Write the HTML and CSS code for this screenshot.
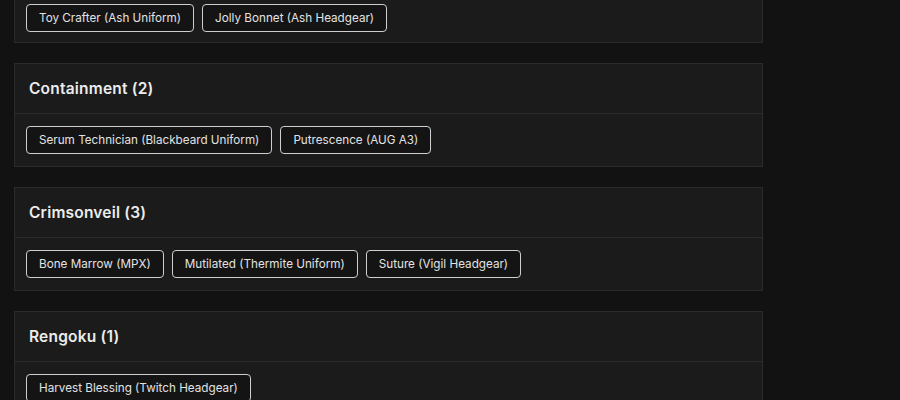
FILE: index.html
```html
<!DOCTYPE html>
<html lang="en">
<head>
    <meta charset="UTF-8">
    <title>Event Collections</title>
    <link rel="stylesheet" href="styles.css">
</head>
<body>
    <div class="collections">
        <section class="collection collection-tail">
            <div class="collection-items">
                <span class="item-tag">Toy Crafter (Ash Uniform)</span>
                <span class="item-tag">Jolly Bonnet (Ash Headgear)</span>
            </div>
        </section>

        <section class="collection">
            <h3 class="collection-title">Containment (2)</h3>
            <div class="collection-items">
                <span class="item-tag">Serum Technician (Blackbeard Uniform)</span>
                <span class="item-tag">Putrescence (AUG A3)</span>
            </div>
        </section>

        <section class="collection">
            <h3 class="collection-title">Crimsonveil (3)</h3>
            <div class="collection-items">
                <span class="item-tag">Bone Marrow (MPX)</span>
                <span class="item-tag">Mutilated (Thermite Uniform)</span>
                <span class="item-tag">Suture (Vigil Headgear)</span>
            </div>
        </section>

        <section class="collection">
            <h3 class="collection-title">Rengoku (1)</h3>
            <div class="collection-items">
                <span class="item-tag">Harvest Blessing (Twitch Headgear)</span>
            </div>
        </section>
    </div>
</body>
</html>
```

FILE: styles.css
```css
/* Basic reset */
* {
    margin: 0;
    padding: 0;
    box-sizing: border-box;
}

body {
    background-color: #121212;
    color: #e6e6e6;
    font-family: Inter, 'Open Sans', sans-serif;
    overflow: hidden;
}

/* List of collection cards, scrolled part way down */
.collections {
    width: 749px;
    margin-left: 14px;
    margin-top: -9px;
    display: flex;
    flex-direction: column;
    gap: 20px;
}

.collection {
    background-color: #1b1b1b;
    border: 1px solid #2b2b2b;
}

/* Header row of a card */
.collection-title {
    height: 50px;
    display: flex;
    align-items: center;
    padding-left: 14px;
    font-size: 15.5px;
    font-weight: 600;
    letter-spacing: 0.2px;
    color: #ececec;
    border-bottom: 1px solid #2b2b2b;
}

/* Tags inside a card */
.collection-items {
    display: flex;
    flex-wrap: wrap;
    gap: 8px;
    padding: 12px 11px;
}

.collection-tail .collection-items {
    padding-bottom: 10px;
}

.item-tag {
    display: inline-block;
    height: 28px;
    line-height: 26px;
    padding: 0 12px;
    border: 1px solid #cfcfcf;
    border-radius: 4px;
    background-color: #141414;
    font-size: 11.7px;
    color: #e2e2e2;
}
```
